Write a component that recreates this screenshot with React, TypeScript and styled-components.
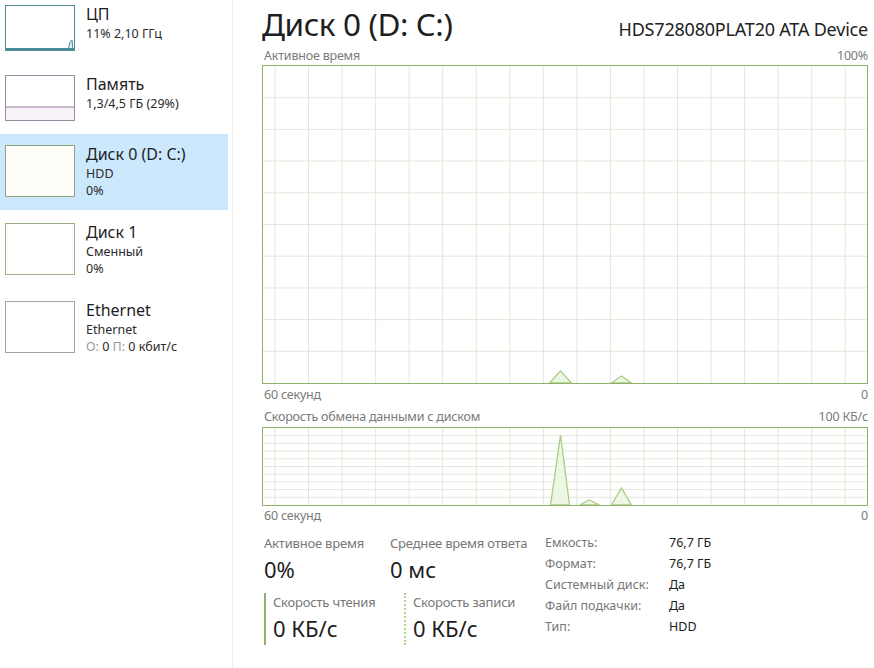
import React from "react";
import styled, { createGlobalStyle } from "styled-components";

const GlobalStyle = createGlobalStyle`
  html, body { margin: 0; padding: 0; background: #fff; }
  body {
    font-family: "Noto Sans", "Open Sans", sans-serif;
    color: #1b1b1b;
    overflow: hidden;
  }
`;

type SideItem = {
  title: string;
  lines: React.ReactNode[];
  color: string;
  kind: "cpu" | "mem" | "disk" | "net";
  selected?: boolean;
};

function getItems(): SideItem[] {
  return [
    { title: "ЦП", lines: ["11% 2,10 ГГц"], color: "#4e8c9a", kind: "cpu" },
    { title: "Память", lines: ["1,3/4,5 ГБ (29%)"], color: "#9a8aa2", kind: "mem" },
    { title: "Диск 0 (D: C:)", lines: ["HDD", "0%"], color: "#8ea37c", kind: "disk", selected: true },
    { title: "Диск 1", lines: ["Сменный", "0%"], color: "#9cb088", kind: "disk" },
    {
      title: "Ethernet",
      lines: [
        "Ethernet",
        <>
          <Dim>О:</Dim> 0 <Dim>П:</Dim> 0 кбит/с
        </>,
      ],
      color: "#a8a49c",
      kind: "net",
    },
  ];
}

function ThumbGraph({ kind, color }: { kind: SideItem["kind"]; color: string }) {
  if (kind === "cpu")
    return (
      <svg width="100%" height="100%" viewBox="0 0 68 44" preserveAspectRatio="none">
        <path d="M62 44 L64 36 L66 34 L67 44 Z" fill="#d9eef3" stroke={color} strokeWidth="1" />
        <line x1="0" y1="43" x2="68" y2="43" stroke={color} strokeWidth="2" />
      </svg>
    );
  if (kind === "mem")
    return (
      <svg width="100%" height="100%" viewBox="0 0 68 44" preserveAspectRatio="none">
        <rect x="0" y="31" width="68" height="13" fill="#f7f1f8" />
        <line x1="0" y1="31" x2="68" y2="31" stroke="#9c7aa6" strokeWidth="1" />
      </svg>
    );
  return null;
}

function Sidebar() {
  return (
    <Side>
      {getItems().map((it) => (
        <Item key={it.title} $selected={it.selected}>
          <Thumb $color={it.color} $tall={it.lines.length > 1} $fill={it.selected ? "#fcfef7" : "#fff"}>
            <ThumbGraph kind={it.kind} color={it.color} />
          </Thumb>
          <ItemText>
            <ItemTitle>{it.title}</ItemTitle>
            {it.lines.map((l, i) => (
              <ItemSub key={i}>{l}</ItemSub>
            ))}
          </ItemText>
        </Item>
      ))}
    </Side>
  );
}

type Peak = [number, number, number, number]; // start, top x, top y, end

function Chart({ height, rows, peaks }: { height: number; rows: number; peaks: Peak[] }) {
  const w = 605;
  const vLines: number[] = [];
  for (let x = 12; x < w; x += 33.6) vLines.push(x);
  const hLines: number[] = [];
  for (let i = 1; i < rows; i++) hLines.push((height / rows) * i);
  return (
    <ChartBox $h={height}>
      <svg width="100%" height="100%" viewBox={`0 0 ${w} ${height}`} preserveAspectRatio="none">
        {vLines.map((x) => (
          <line key={"v" + x} x1={x} y1={0} x2={x} y2={height} stroke="#e1e8d9" strokeWidth="1" />
        ))}
        {hLines.map((y) => (
          <line key={"h" + y} x1={0} y1={y} x2={w} y2={y} stroke="#e1e8d9" strokeWidth="1" />
        ))}
        {peaks.map(([a, px, py, b], i) => (
          <path
            key={i}
            d={`M${a} ${height} L${px} ${py} L${b} ${height} Z`}
            fill="#eef6e4"
            stroke="#a9cc86"
            strokeWidth="1.3"
          />
        ))}
      </svg>
    </ChartBox>
  );
}

const info: [string, string][] = [
  ["Емкость:", "76,7 ГБ"],
  ["Формат:", "76,7 ГБ"],
  ["Системный диск:", "Да"],
  ["Файл подкачки:", "Да"],
  ["Тип:", "HDD"],
];

export default function App() {
  return (
    <>
      <GlobalStyle />
      <Page>
        <Sidebar />
        <Main>
          <Header>
            <Title>Диск 0 (D: C:)</Title>
            <Device>HDS728080PLAT20 ATA Device</Device>
          </Header>
          <LabelRow $bottom={2}>
            <span>Активное время</span>
            <span>100%</span>
          </LabelRow>
          <Chart height={317} rows={10} peaks={[[287, 298, 305, 309], [349, 359, 310, 369]]} />
          <LabelRow $top={3}>
            <span>60 секунд</span>
            <span>0</span>
          </LabelRow>
          <LabelRow $top={7} $bottom={3}>
            <span>Скорость обмена данными с диском</span>
            <span>100 КБ/с</span>
          </LabelRow>
          <Chart
            height={77}
            rows={10}
            peaks={[[288, 298, 7, 307], [317, 327, 72, 337], [349, 359, 60, 369]]}
          />
          <LabelRow $top={2}>
            <span>60 секунд</span>
            <span>0</span>
          </LabelRow>
          <Stats>
            <Metrics>
              <MetricRow>
                <Metric $w={126}>
                  <StatLabel>Активное время</StatLabel>
                  <StatValue>0%</StatValue>
                </Metric>
                <Metric $w={155}>
                  <StatLabel>Среднее время ответа</StatLabel>
                  <StatValue>0 мс</StatValue>
                </Metric>
              </MetricRow>
              <MetricRow>
                <Rate $w={140}>
                  <StatLabel>Скорость чтения</StatLabel>
                  <StatValue>0 КБ/с</StatValue>
                </Rate>
                <Rate $w={136} $dotted>
                  <StatLabel>Скорость записи</StatLabel>
                  <StatValue>0 КБ/с</StatValue>
                </Rate>
              </MetricRow>
            </Metrics>
            <InfoGrid>
              {info.map(([k, v]) => (
                <React.Fragment key={k}>
                  <InfoKey>{k}</InfoKey>
                  <InfoVal>{v}</InfoVal>
                </React.Fragment>
              ))}
            </InfoGrid>
          </Stats>
        </Main>
      </Page>
    </>
  );
}

const Page = styled.div`
  display: flex;
  width: 874px;
  height: 668px;
  background: #fff;
`;

const Side = styled.nav`
  width: 233px;
  flex-shrink: 0;
  border-right: 1px solid #ececec;
  display: flex;
  flex-direction: column;
  gap: 2px;
  margin-top: -6px;
  height: 674px;
  box-sizing: border-box;
`;

const Item = styled.div<{ $selected?: boolean }>`
  display: flex;
  gap: 11px;
  width: 228px;
  box-sizing: border-box;
  padding: 11px 0 11px 5px;
  background: ${(p) => (p.$selected ? "#cce8fc" : "transparent")};
`;

const Thumb = styled.div<{ $color: string; $tall: boolean; $fill: string }>`
  width: 70px;
  height: ${(p) => (p.$tall ? 52 : 46)}px;
  box-sizing: border-box;
  border: 1px solid ${(p) => p.$color};
  background: ${(p) => p.$fill};
  flex-shrink: 0;
  display: flex;
`;

const ItemText = styled.div`
  display: flex;
  flex-direction: column;
  margin-top: -2px;
`;

const ItemTitle = styled.div`
  font-size: 16px;
  line-height: 22px;
  color: #1e1e1e;
`;

const ItemSub = styled.div`
  font-size: 12.5px;
  line-height: 17px;
  color: #2b2b2b;
`;

const Dim = styled.span`
  color: #9a9a9a;
`;

const Main = styled.main`
  flex: 1;
  padding: 0 6px 0 29px;
  display: flex;
  flex-direction: column;
`;

const Header = styled.header`
  display: flex;
  justify-content: space-between;
  align-items: baseline;
  height: 48px;
`;

const Title = styled.h1`
  margin: 0;
  font-size: 31.5px;
  font-weight: 400;
  line-height: 48px;
  color: #1f1f1f;
  letter-spacing: -0.4px;
`;

const Device = styled.div`
  font-size: 18px;
  color: #222;
  letter-spacing: -0.2px;
`;

const LabelRow = styled.div<{ $top?: number; $bottom?: number }>`
  display: flex;
  justify-content: space-between;
  font-size: 12.5px;
  line-height: 15px;
  height: 15px;
  color: #7a7a7a;
  margin-top: ${(p) => p.$top ?? 0}px;
  margin-bottom: ${(p) => p.$bottom ?? 0}px;
  padding-left: 2px;
  letter-spacing: -0.2px;
`;

const ChartBox = styled.div<{ $h: number }>`
  height: ${(p) => p.$h}px;
  border: 1.5px solid #8fb16a;
  box-sizing: content-box;
  display: flex;
`;

const Stats = styled.section`
  display: flex;
  margin-top: 10px;
  padding-left: 2px;
`;

const Metrics = styled.div`
  display: flex;
  flex-direction: column;
  gap: 7px;
  width: 281px;
  padding-top: 1px;
`;

const MetricRow = styled.div`
  display: flex;
`;

const Metric = styled.div<{ $w: number }>`
  width: ${(p) => p.$w}px;
  display: flex;
  flex-direction: column;
`;

const Rate = styled.div<{ $w: number; $dotted?: boolean }>`
  width: ${(p) => p.$w}px;
  box-sizing: border-box;
  display: flex;
  flex-direction: column;
  border-left: 2px ${(p) => (p.$dotted ? "dotted #b9d38c" : "solid #8fb16a")};
  padding-left: 7px;
`;

const StatLabel = styled.div`
  font-size: 13px;
  line-height: 18px;
  color: #777;
  letter-spacing: -0.2px;
  white-space: nowrap;
`;

const StatValue = styled.div`
  font-size: 22px;
  line-height: 34px;
  color: #1e1e1e;
`;

const InfoGrid = styled.div`
  display: grid;
  grid-template-columns: 124px auto;
  grid-auto-rows: 21px;
  font-size: 12.5px;
  align-items: center;
  margin-top: -1px;
`;

const InfoKey = styled.div`
  color: #777;
`;

const InfoVal = styled.div`
  color: #1e1e1e;
`;
